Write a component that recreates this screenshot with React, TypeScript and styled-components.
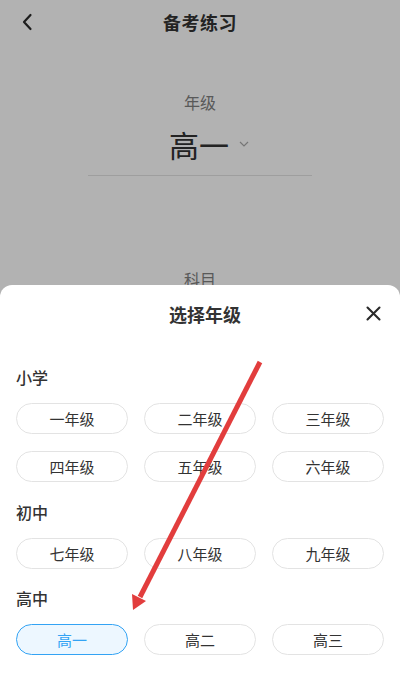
import React from "react";
import styled, { createGlobalStyle } from "styled-components";

const Global = createGlobalStyle`
  html, body { margin: 0; padding: 0; }
  body {
    font-family: "Noto Sans CJK SC", "Noto Sans", sans-serif;
    background: #fff;
  }
  #root { width: 400px; height: 684px; overflow: hidden; position: relative; }
`;

const Page = styled.div`
  position: relative;
  width: 400px;
  height: 684px;
  overflow: hidden;
  background: #fff;
`;

const NavBar = styled.header`
  height: 44px;
  display: grid;
  grid-template-columns: 54px 1fr 54px;
  align-items: center;
`;

const BackButton = styled.button`
  border: 0;
  background: none;
  padding: 0 0 0 21px;
  height: 44px;
  display: flex;
  align-items: center;
  color: #333;
`;

const NavTitle = styled.h1`
  margin: 0;
  text-align: center;
  font-size: 18px;
  font-weight: 700;
  color: #333;
  letter-spacing: 0.5px;
`;

const Field = styled.section`
  display: flex;
  flex-direction: column;
  align-items: center;
  padding-top: 46px;
`;

const FieldLabel = styled.div`
  font-size: 16px;
  line-height: 24px;
  color: #808080;
`;

const FieldValue = styled.div`
  width: 224px;
  height: 62px;
  box-sizing: border-box;
  display: flex;
  align-items: center;
  justify-content: center;
  gap: 10px;
  padding-left: 18px;
  padding-bottom: 2px;
  font-size: 30px;
  color: #333;
  border-bottom: 1px solid #e2e2e2;
`;

const SubjectField = styled(Field)`
  padding-top: 91px;
`;

const Backdrop = styled.div`
  position: absolute;
  inset: 0;
  background: rgba(0, 0, 0, 0.3);
`;

const Sheet = styled.div`
  position: absolute;
  left: 0;
  right: 0;
  top: 285px;
  bottom: 0;
  background: #fff;
  border-radius: 12px 12px 0 0;
  padding: 0 16px;
`;

const SheetHeader = styled.div`
  height: 57px;
  display: flex;
  align-items: center;
  justify-content: center;
  padding-left: 10px;
  position: relative;
`;

const SheetTitle = styled.h2`
  margin: 0;
  font-size: 18px;
  font-weight: 700;
  color: #333;
`;

const CloseButton = styled.button`
  position: absolute;
  right: 2px;
  top: 50%;
  transform: translateY(-50%);
  border: 0;
  background: none;
  padding: 0;
  width: 18px;
  height: 18px;
  display: flex;
  align-items: center;
  justify-content: center;
  color: #333;
`;

const Body = styled.div`
  padding-top: 24px;
  display: flex;
  flex-direction: column;
  gap: 18.5px;
`;

const Section = styled.div`
  display: flex;
  flex-direction: column;
`;

const SectionLabel = styled.div`
  font-size: 16px;
  line-height: 22px;
  font-weight: 500;
  color: #333;
  margin-bottom: 15px;
`;

const Grid = styled.div`
  display: grid;
  grid-template-columns: repeat(3, 112px);
  column-gap: 16px;
  row-gap: 17px;
`;

const Chip = styled.button<{ $active?: boolean }>`
  height: 31px;
  border-radius: 16px;
  box-sizing: border-box;
  border: 1px solid ${(p) => (p.$active ? "#33a3f4" : "#e3e3e3")};
  background: ${(p) => (p.$active ? "#edf7ff" : "#fff")};
  color: ${(p) => (p.$active ? "#33a3f4" : "#333")};
  font-family: "Noto Sans CJK SC", sans-serif;
  font-size: 15px;
  padding: 0;
  display: flex;
  align-items: center;
  justify-content: center;
`;

const Annotation = styled.svg`
  position: absolute;
  left: 0;
  top: 0;
  width: 400px;
  height: 684px;
  pointer-events: none;
`;

const groups = [
  { name: "小学", items: ["一年级", "二年级", "三年级", "四年级", "五年级", "六年级"] },
  { name: "初中", items: ["七年级", "八年级", "九年级"] },
  { name: "高中", items: ["高一", "高二", "高三"] },
];

export default function App() {
  const selected = "高一";
  return (
    <Page>
      <Global />
      <NavBar>
        <BackButton aria-label="返回">
          <svg width="12" height="18" viewBox="0 0 12 18" fill="none">
            <path d="M9.5 2 L3 9 L9.5 16" stroke="#2a2a2a" strokeWidth="2.2" strokeLinecap="round" strokeLinejoin="round" />
          </svg>
        </BackButton>
        <NavTitle>备考练习</NavTitle>
        <span />
      </NavBar>
      <Field>
        <FieldLabel>年级</FieldLabel>
        <FieldValue>
          <span>高一</span>
          <svg width="10" height="6" viewBox="0 0 10 6" fill="none">
            <path d="M1 1 L5 5 L9 1" stroke="#aaa" strokeWidth="1.2" />
          </svg>
        </FieldValue>
      </Field>
      <SubjectField>
        <FieldLabel>科目</FieldLabel>
      </SubjectField>
      <Backdrop />
      <Sheet>
        <SheetHeader>
          <SheetTitle>选择年级</SheetTitle>
          <CloseButton aria-label="关闭">
            <svg width="15" height="15" viewBox="0 0 15 15" fill="none">
              <path d="M1.5 1.5 L13.5 13.5 M13.5 1.5 L1.5 13.5" stroke="#2a2a2a" strokeWidth="2.1" strokeLinecap="round" />
            </svg>
          </CloseButton>
        </SheetHeader>
        <Body>
          {groups.map((g) => (
            <Section key={g.name}>
              <SectionLabel>{g.name}</SectionLabel>
              <Grid>
                {g.items.map((it) => (
                  <Chip key={it} $active={it === selected}>
                    {it}
                  </Chip>
                ))}
              </Grid>
            </Section>
          ))}
        </Body>
      </Sheet>
      <Annotation viewBox="0 0 400 684">
        <line x1="260" y1="362" x2="140" y2="597" stroke="#e23d3d" strokeWidth="5" />
        <polygon points="133,610 132,594 146,601" fill="#e23d3d" />
      </Annotation>
    </Page>
  );
}
